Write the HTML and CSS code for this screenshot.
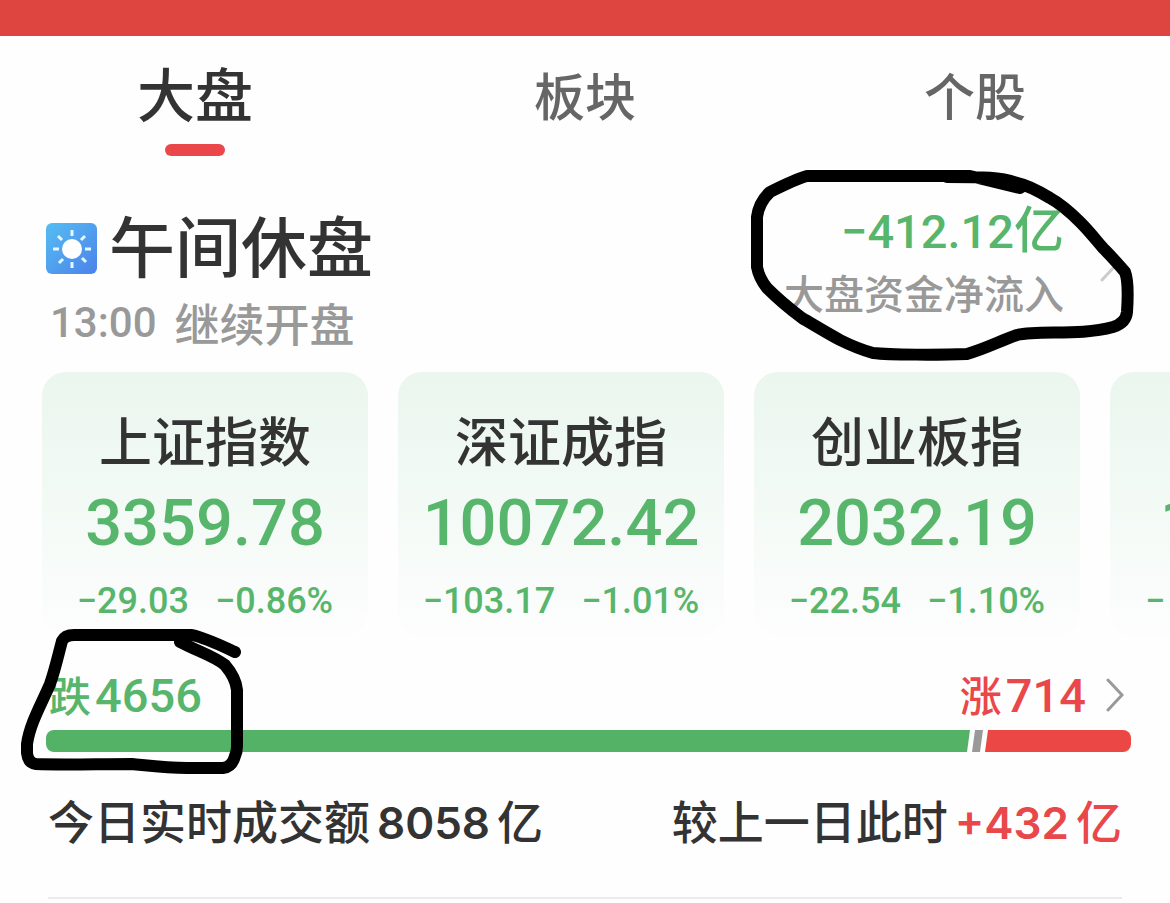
FILE: index.html
```html
<!DOCTYPE html>
<html lang="zh-CN">
<head>
<meta charset="utf-8">
<meta name="viewport" content="width=device-width, initial-scale=1">
<title>大盘</title>
<link rel="stylesheet" href="styles.css">
</head>
<body>
<header class="topbar"></header>
<nav class="tabs">
  <button class="tab tab-active" type="button">大盘</button>
  <button class="tab" type="button">板块</button>
  <button class="tab" type="button">个股</button>
</nav>
<main class="market">
  <section class="status">
    <div class="session">
      <h1 class="session-title">
        <svg class="sun" viewBox="0 0 51 51" aria-hidden="true">
          <defs><linearGradient id="sky" x1="0" y1="0" x2="1" y2="1"><stop offset="0" stop-color="#56bdf3"/><stop offset="1" stop-color="#4b82ea"/></linearGradient></defs>
          <rect width="51" height="51" rx="6" fill="url(#sky)"/>
          <circle cx="26" cy="26" r="10" fill="#fff"/>
          <g stroke="#e4f8ff" stroke-width="3"><path d="M26 7v6M26 39v6M7 26h6M39 26h6M12 13l4 4M36 35l4 4M13 40l4-4M35 17l4-4"/></g>
        </svg>
        <span class="session-name">午间休盘</span>
      </h1>
      <p class="session-next"><span class="num">13:00</span><span>继续开盘</span></p>
    </div>
    <div class="flow">
      <div class="flow-text">
        <p class="flow-value"><span class="num">−412.12</span>亿</p>
        <p class="flow-label">大盘资金净流入</p>
      </div>
      <button class="more more-light" type="button" aria-label="资金流入详情">
        <svg class="chevron" viewBox="0 0 18 34"><path d="M2 2l14 15L2 32"/></svg>
      </button>
    </div>
    <svg class="pen pen-flow" viewBox="0 0 400 210" aria-hidden="true">
      <path d="M270 18L220 6L57 6C46 9 30 17 20 22Q9 32 7 47L7 97Q9 108 17 118C28 129 40 139 52 148C64 155 77 163 90 170C100 175 112 180 123 183C140 185 190 185 217 184C235 179 250 171 267 165C290 160 330 166 363 157Q376 153 377 142Q379 112 375 102C369 95 362 87 353 78C346 70 340 62 330 52C321 43 311 34 300 28C290 22 277 15 267 13C250 7 235 7 197 7"/>
    </svg>
  </section>

  <section class="cards">
    <article class="card">
      <h2 class="card-name">上证指数</h2>
      <p class="card-value num">3359.78</p>
      <p class="card-change num"><span>−29.03</span><span>−0.86%</span></p>
    </article>
    <article class="card">
      <h2 class="card-name">深证成指</h2>
      <p class="card-value num">10072.42</p>
      <p class="card-change num"><span>−103.17</span><span>−1.01%</span></p>
    </article>
    <article class="card">
      <h2 class="card-name">创业板指</h2>
      <p class="card-value num">2032.19</p>
      <p class="card-change num"><span>−22.54</span><span>−1.10%</span></p>
    </article>
    <article class="card card-peek">
      <h2 class="card-name">&nbsp;</h2>
      <p class="card-value num">1</p>
      <p class="card-change num"><span>−</span></p>
    </article>
  </section>

  <section class="breadth">
    <div class="breadth-head">
      <p class="count down">跌<span class="num">4656</span></p>
      <p class="count up">涨<span class="num">714</span></p>
      <button class="more" type="button" aria-label="涨跌分布">
        <svg class="chevron" viewBox="0 0 18 34"><path d="M2 2l14 15L2 32"/></svg>
      </button>
    </div>
    <div class="bar">
      <span class="seg seg-down"></span>
      <span class="seg seg-flat"></span>
      <span class="seg seg-up"></span>
    </div>
    <svg class="pen pen-down" viewBox="0 0 240 160" aria-hidden="true">
      <path d="M213 32C200 26 184 18 170 15L52 15Q43 15 40 21C36 36 33 50 28 64C20 83 8 103 5 124L5 133Q6 143 14 144C40 145 75 144 110 144C130 146 145 148 165 148L201 148Q210 147 213 136Q215 132 215 126L215 70Q214 58 203 45C192 36 175 31 158 22"/>
    </svg>
  </section>

  <section class="turnover">
    <p class="turnover-item">今日实时成交额<span class="wide">8058</span>亿</p>
    <p class="turnover-item">较上一日此时<span class="up"><span class="wide">+432</span>亿</span></p>
  </section>
</main>
</body>
</html>
```
FILE: styles.css
```css
* { box-sizing: border-box; }
body {
  margin: 0;
  background: #fefefe;
  color: #333;
  font-family: "Noto Sans CJK SC", sans-serif;
  font-weight: 500;
  overflow-x: hidden;
}
h1, h2, p { margin: 0; font-weight: 500; }
button { padding: 0; border: 0; background: none; color: inherit; font: inherit; }
.num { font-family: Roboto, "Noto Sans CJK SC", sans-serif; }
.wide { margin: 0 7px; font-family: Inter, sans-serif; font-size: 44px; font-weight: 600; }
.up { color: #ea474b; }
.down { color: #57b66b; }

.topbar { height: 36px; background: #de4440; }
.tabs { display: grid; grid-template-columns: repeat(3, 1fr); height: 120px; }
.tab {
  display: flex;
  flex-direction: column;
  align-items: center;
  color: #666;
  font-size: 51px;
  line-height: 116px;
}
.tab-active { justify-content: space-between; padding-top: 5px; color: #333; font-size: 58px; line-height: 103px; }
.tab-active::after { content: ""; width: 60px; height: 12px; border-radius: 6px; background: #ea474b; }

.status {
  position: relative;
  display: flex;
  justify-content: space-between;
  height: 216px;
  padding: 53px 46px 0;
}
.session-title { display: flex; align-items: center; gap: 12px; font-size: 66px; line-height: 68px; }
.session-name { padding-bottom: 10px; }
.sun { width: 51px; height: 51px; }
.session-next {
  display: flex;
  align-items: center;
  gap: 18px;
  padding-left: 4px;
  color: #999;
  font-size: 45px;
  line-height: 72px;
}
.session-next .num { font-size: 42px; }
.flow { display: flex; align-items: flex-start; gap: 36px; margin: -7px 6px 0 0; }
.flow-text { text-align: right; }
.flow-value { color: #57b66b; font-size: 50px; line-height: 48px; }
.flow-value .num { font-size: 47px; }
.flow-label { margin-top: 4px; color: #999; font-size: 40px; line-height: 64px; }
.more { display: flex; flex: none; }
.more-light { margin-top: 46px; opacity: 0.5; }
.chevron { width: 18px; height: 34px; fill: none; stroke: #999; stroke-width: 3; stroke-linecap: round; }
.pen { position: absolute; overflow: visible; fill: none; stroke: #000; stroke-width: 12; stroke-linecap: round; stroke-linejoin: round; pointer-events: none; }
.pen-flow { top: 14px; right: 20px; width: 400px; height: 210px; }

.cards { display: flex; gap: 30px; padding-left: 42px; overflow: hidden; }
.card {
  flex: 0 0 326px;
  height: 264px;
  padding-top: 30px;
  border-radius: 24px;
  background: linear-gradient(#eaf6ee, #f3faf6 50%, #fdfdfd);
  text-align: center;
}
.card-name { font-size: 53px; line-height: 74px; }
.card-value { color: #57b66b; font-size: 65px; line-height: 94px; }
.card-change { display: flex; justify-content: center; gap: 26px; color: #57b66b; font-size: 36px; line-height: 62px; }
.card-peek .card-value { padding-left: 50px; text-align: left; }
.card-peek .card-change { justify-content: flex-start; padding-left: 35px; }

.breadth { position: relative; padding: 26px 39px 0 46px; }
.breadth-head { display: flex; align-items: center; gap: 20px; padding: 0 7px 2px 3px; }
.count { font-size: 42px; line-height: 64px; }
.count .num { margin-left: 4px; font-size: 47px; }
.count.down { margin-right: auto; }
.bar { display: flex; gap: 2px; height: 22px; overflow: hidden; border-radius: 8px; }
.seg-down { flex: 924; background: #53b265; clip-path: polygon(0 0, 100% 0, calc(100% - 3px) 100%, 0 100%); }
.seg-flat { flex: 0 0 11px; background: #999; clip-path: polygon(3px 0, 100% 0, 8px 100%, 0 100%); }
.seg-up { flex: 146; background: #eb4745; clip-path: polygon(3px 0, 100% 0, 100% 100%, 0 100%); }
.pen-down { top: -16px; left: 22px; width: 240px; height: 160px; }

.turnover {
  display: flex;
  align-items: center;
  justify-content: space-between;
  height: 147px;
  margin: 0 48px;
  padding-bottom: 8px;
  border-bottom: 2px solid #ebebeb;
}
.turnover-item { font-size: 46px; line-height: 68px; white-space: nowrap; }
```
